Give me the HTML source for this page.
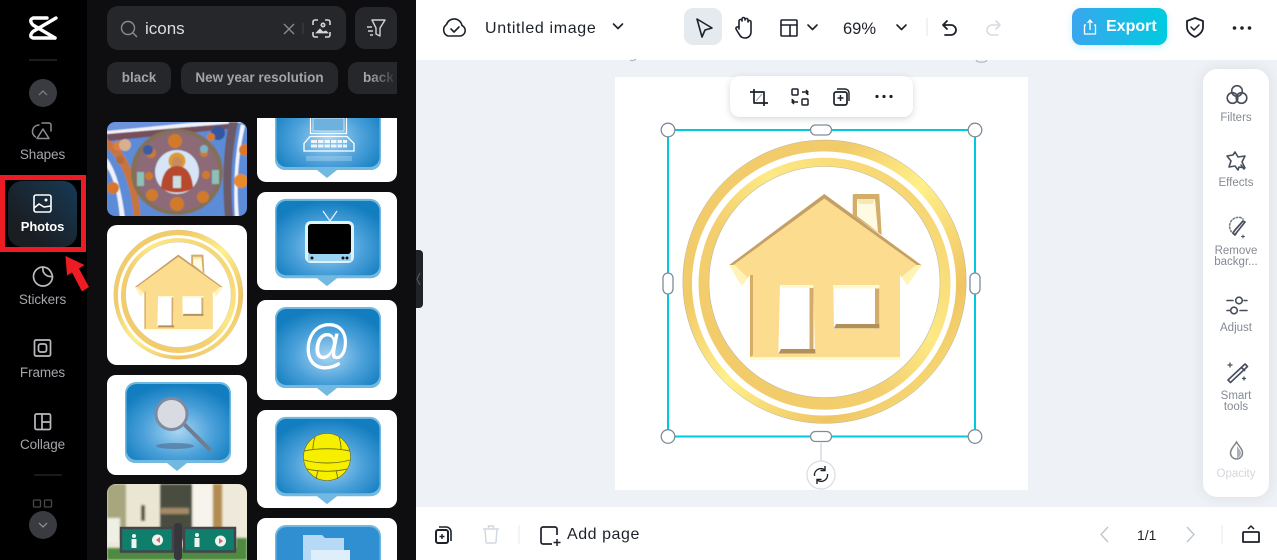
<!DOCTYPE html>
<html style="overflow:hidden;width:1277px;height:560px"><head><meta charset="utf-8"><style>
html,body{margin:0;padding:0}
body{width:1277px;height:560px;overflow:hidden;position:relative;background:#eef1f5;font-family:"Liberation Sans",sans-serif}
#w{left:0;top:0;width:1277px;height:560px;overflow:hidden}
div,span{position:absolute;white-space:nowrap}
.side{color:#a5a6ab;font-size:13.5px;width:85px;text-align:center;left:0;letter-spacing:-.1px}
.chip{background:#26272b;border-radius:10px;height:32px;top:62px;color:#a3a4a8;font-size:13.500px;line-height:31px;text-align:center;font-weight:bold}
.tool{color:#858a94;font-size:11.500px;width:66px;text-align:center;left:1203px;line-height:11px}
svg{position:absolute;left:0;top:0}
</style></head><body><div id="w">
<div style="left:0;top:0;width:87px;height:560px;background:#000"></div>
<div style="left:87px;top:0;width:329px;height:560px;background:#0e0e10"></div>
<div style="left:416px;top:0;width:861px;height:60px;background:#fff"></div>
<div style="left:416px;top:507px;width:861px;height:53px;background:#fff"></div>
<div style="left:615px;top:77px;width:413px;height:413px;background:#fff"></div>
<div style="left:1203px;top:69px;width:66px;height:428px;background:#fff;border-radius:14px;box-shadow:0 0 14px rgba(60,70,90,.1)"></div>
<div style="left:107px;top:6px;width:239px;height:44px;background:#26272b;border-radius:11px"></div>
<div style="left:355px;top:7px;width:42px;height:42px;background:#26272b;border-radius:10px"></div>
<div class="chip" style="left:107px;width:64px">black</div>
<div class="chip" style="left:181px;width:157px">New year resolution</div>
<div class="chip" style="left:348px;width:49px;border-radius:10px 0 0 10px;text-align:left;overflow:hidden"><span style="left:15px;top:0;color:#a3a4a8">back</span><span style="left:22px;top:0;width:27px;height:32px;background:linear-gradient(90deg,rgba(38,39,43,0),#26272b)"></span></div>
<div style="left:8px;top:181px;width:69px;height:66px;border-radius:14px;background:linear-gradient(45deg,#1a1d22 25%,#163a56)"></div>
<div style="left:1072px;top:8px;width:95px;height:37px;border-radius:9px;background:linear-gradient(90deg,#3aa6ee,#00cbdf);box-shadow:0 2px 8px rgba(0,190,220,.18)"></div>
<div style="left:684px;top:8px;width:38px;height:37px;background:#e5eaef;border-radius:9px"></div>
<div style="left:730px;top:76px;width:183px;height:41px;background:#fff;border-radius:10px;box-shadow:0 2px 7px rgba(50,60,80,.2)"></div>
<div style="left:107px;top:225px;width:140px;height:140px;background:#fff;border-radius:10px"></div>

<svg width="1277" height="560" viewBox="0 0 1277 560" fill="none">
<defs>
<filter id="b1" x="-5%" y="-5%" width="110%" height="110%"><feGaussianBlur stdDeviation=".6"/></filter>
<filter id="b2" x="-5%" y="-5%" width="110%" height="110%"><feGaussianBlur stdDeviation="1"/></filter>
<radialGradient id="bl" cx=".5" cy=".62" r=".62"><stop offset="0" stop-color="#a8d5f3"/><stop offset=".55" stop-color="#4aa0d9"/><stop offset="1" stop-color="#127dbf"/></radialGradient>
<linearGradient id="g1" x1="0" y1="0" x2="1" y2="1"><stop offset="0" stop-color="#f3cd6d"/><stop offset=".3" stop-color="#f2cb69"/><stop offset=".5" stop-color="#fff08a"/><stop offset=".75" stop-color="#efc563"/><stop offset="1" stop-color="#fdee88"/></linearGradient>
<linearGradient id="g2" x1="0" y1="1" x2="1" y2="0"><stop offset="0" stop-color="#f2ca67"/><stop offset=".4" stop-color="#f3cf6f"/><stop offset=".6" stop-color="#fde985"/><stop offset="1" stop-color="#f2cb69"/></linearGradient>
<symbol id="bub" viewBox="0 0 140 100" preserveAspectRatio="none">
<rect width="140" height="100" rx="9" fill="#fff"/>
<path d="M18 18a11 11 0 0 1 11-11h84a11 11 0 0 1 11 11v60a10 10 0 0 1-10 10h-34l-10 8-10-8H28a10 10 0 0 1-10-10z" fill="#71b9e0"/>
<path d="M19.500 19a10 10 0 0 1 10-10h83a10 10 0 0 1 10 10v56a10 10 0 0 1-10 10H29.500a10 10 0 0 1-10-10z" fill="url(#bl)"/>
</symbol>
<symbol id="home" viewBox="668 129 307 307">
<circle cx="824.5" cy="281.7" r="141.7" fill="url(#g1)" stroke="#b9b3a0" stroke-width=".5"/>
<circle cx="824" cy="283.5" r="132" fill="#fff"/>
<circle cx="824.5" cy="283.7" r="126" fill="url(#g2)"/>
<circle cx="824.5" cy="282" r="115.5" fill="#fff" stroke="#bdb9a8" stroke-width=".6"/>
<path d="M852.7 195l1-1h25.600l2.400 41-29-20z" fill="#d3ad6a"/><path d="M857 199h18l3 33-21-16z" fill="#fffbe3"/><path d="M857 199h18l-2 5h-14z" fill="#f6e8b0"/>
<path d="M824.3 194l97.4 71-14.4 20-7.3-10v82.3H750V275l-8.3 10.7L729.300 265z" fill="#fcdc8e"/>
<path d="M824.3 194l-95 71 2 1.500 93-68 95.400 68.500 2-1.500z" fill="#c4a066"/>
<path d="M729.300 265l12.400 20.700 6-8-13-12.700zM921.700 265l-14.400 20-6-8 15-12z" fill="#fff3b5"/>
<path d="M750 275v82.300l3-2V275z" fill="#d6ad68"/><path d="M750 357.300h150.700v2.700H750z" fill="#fffcd0"/>
<path d="M780 285h33.300l1.700 68.300h-36.700z" fill="#fff"/><path d="M809.500 287h4v66.300h-4z" fill="#d3ac6c"/><path d="M781 349h34l.5 4.500h-37z" fill="#b2905a"/>
<path d="M780 285h33.300v3H783z" fill="#fff8d0"/>
<path d="M833.300 285h46v43.300H834z" fill="#fff"/><path d="M875 288h4.300v40.300H875z" fill="#d3ac6c"/><path d="M836 324h43.300v4.300H834z" fill="#b2905a"/><path d="M833.300 285h46v3.500h-45z" fill="#fff8d0"/>
</symbol>
</defs>

<!-- left rail -->
<g stroke="#fff" stroke-width="3.400" stroke-linejoin="round" stroke-linecap="round">
<path d="M56 18L33 31.500Q28.500 36.500 33 38H55"/>
<path d="M55 38L33 25Q28.500 20 33 18H47"/>
</g>
<path d="M29 60h28" stroke="#3a3a3d" stroke-width="1"/>
<circle cx="43" cy="93" r="14" fill="#3a3b40"/>
<path d="M39 95l4-4 4 4" stroke="#7c7d82" stroke-width="1.300"/>
<g stroke="#8b8c90" stroke-width="1.500" stroke-linejoin="round" stroke-linecap="round"><path d="M39 125a6.500 6.500 0 0 0-3.500 12"/><path d="M42 123h7a2 2 0 0 1 2 2v6"/><path d="M43 129l-6 9.500h12z"/></g>
<g stroke="#fff" stroke-width="1.600" stroke-linejoin="round"><rect x="34" y="195" width="17" height="17" rx="2"/><path d="M34 208l5-4 5 3 7-1"/><circle cx="46" cy="200" r="1.500" fill="#fff" stroke="none"/></g>
<g stroke="#b9bbc0" stroke-width="1.700" stroke-linejoin="round"><path d="M43 267a9.500 9.500 0 1 0 9.500 9.500c-1-5-4-9-9.500-9.500z"/><path d="M43 267c-1 6 3 10 9.500 9.500"/></g>
<g stroke="#b9bbc0" stroke-width="1.700"><rect x="34.500" y="340" width="16" height="16" rx="1.500"/><rect x="38.500" y="344" width="8" height="8" rx="2"/></g>
<g stroke="#b9bbc0" stroke-width="1.700"><rect x="35" y="414" width="15.500" height="15.500" rx="1.500"/><path d="M42 414v15.500M42 422h8.500"/></g>
<path d="M34 475h28" stroke="#333" stroke-width="1"/>
<g stroke="#49494d" stroke-width="1.300"><rect x="33.500" y="500" width="7" height="7" rx="1"/><rect x="44.500" y="500" width="7" height="7" rx="1"/></g>
<circle cx="43" cy="525" r="14" fill="#3a3b40"/>
<path d="M39 523l4 4 4-4" stroke="#8b8c90" stroke-width="1.300"/>
<path d="M2.500 177.500h81v72h-81z" stroke="#ed1c24" stroke-width="5"/>
<path d="M65.500 256l19 9-5.500 3.500L89 287l-7 4.500-10-19-5 3z" fill="#ed1c24"/>

<!-- search -->
<g stroke="#8a8b90" stroke-width="1.400"><circle cx="128" cy="28" r="6.500"/><path d="M133 33l4 4"/></g>
<path d="M284 24l10 10M294 24l-10 10" stroke="#8a8b90" stroke-width="1.300"/>
<path d="M303 23v11" stroke="#3f4045"/>
<g stroke="#d6d7da" stroke-width="1.600"><path d="M313 25v-3a2 2 0 0 1 2-2h3M325 20h3a2 2 0 0 1 2 2v3M330 32v3a2 2 0 0 1-2 2h-3M318 37h-3a2 2 0 0 1-2-2v-3"/><circle cx="323" cy="25" r="1.700"/><path d="M316 33l4-4 3 3 3-1 2 2z" fill="#d6d7da" stroke-width=".8"/></g>
<g stroke="#d0d1d4" stroke-width="1.400" stroke-linejoin="round"><path d="M372 20h13l-5 8v8l-4-2v-6z"/><path d="M367 27h5M368 31h5M370 35h3"/></g>

<!-- thumbnails: fresco -->
<clipPath id="c1"><rect x="107" y="122" width="140" height="94" rx="8"/></clipPath>
<g clip-path="url(#c1)"><g filter="url(#b1)">
<rect x="105" y="120" width="144" height="98" fill="#5b8bd8"/>
<path d="M105 120h144v2l-60 3-82 7-2 0z" fill="#6c93dc"/>
<path d="M107 131l82-8 60-3v2l-60 5-82 8z" fill="#f2f3f8"/><path d="M107 134l82-7 40-3-1 5-120 12z" fill="#74505c"/>
<path d="M107 139c24 14 31 46 34 79h-7c-3-30-10-54-27-70z" fill="#c9733e"/>
<path d="M107 158c10 14 15 36 18 60h-5c-2-22-6-40-13-50z" fill="#f0f2fa"/>
<path d="M229 122c-6 30-7 62-4 96h8c-3-32-2-64 5-96z" fill="#6c5a68"/>
<path d="M241 124c-6 30-8 60-6 94h4c-3-32-1-62 6-92z" fill="#f3f4fa"/>
<circle cx="241" cy="181" r="7" fill="#e88a2a"/><circle cx="245" cy="150" r="6" fill="#d8762a"/><circle cx="113" cy="188" r="6" fill="#d8762a"/><circle cx="118" cy="146" r="5" fill="#d9803c"/><circle cx="218" cy="133" r="7" fill="#36559c"/><circle cx="211" cy="137" r="4" fill="#d47a2c"/><circle cx="125" cy="145" r="6" fill="#d8b090"/><circle cx="120" cy="160" r="4" fill="#b56a3a"/>
<ellipse cx="177" cy="172" rx="46" ry="43" fill="#847058"/>
<ellipse cx="177" cy="172" rx="41" ry="39" fill="#8d6b78"/>
<circle cx="177" cy="172" r="22" fill="#d6e6f7"/>
<circle cx="177" cy="161" r="8.500" fill="#dc9a30"/><circle cx="177" cy="162" r="5" fill="#c98a60"/>
<path d="M161 188c1-15 7-22 16-22s15 7 16 22c-9 6-23 6-32 0z" fill="#b7482e"/>
<rect x="173" y="176" width="8" height="12" fill="#c9dfe0"/>
<g fill="#d07a2a"><circle cx="175" cy="141" r="7"/><circle cx="177" cy="204" r="7"/><circle cx="151" cy="153" r="5"/><circle cx="204" cy="153" r="4"/><circle cx="152" cy="195" r="6"/><circle cx="203" cy="197" r="6"/><circle cx="206" cy="175" r="4"/><circle cx="149" cy="176" r="4"/></g>
<rect x="137" y="172" width="7" height="14" fill="#8cc0b8"/><rect x="212" y="170" width="7" height="14" fill="#8cc0b8"/><circle cx="148" cy="150" r="5" fill="#3a5ca0"/><circle cx="204" cy="149" r="4" fill="#7cb6c4"/>
</g></g>
<!-- computer -->
<clipPath id="c2"><path d="M257 118h140v55a9 9 0 0 1-9 9H266a9 9 0 0 1-9-9z"/></clipPath>
<g clip-path="url(#c2)"><use href="#bub" x="257" y="82" width="140" height="100"/>
<path d="M310.500 118v15.500h36V118" stroke="#fff" stroke-width="1.200"/>
<rect x="313" y="118" width="31" height="13" fill="#6db1dd" stroke="#e4f2fb" stroke-width=".8"/>
<path d="M310 136.500h37l7 7v7.500h-50v-7.500z" stroke="#fff" stroke-width="1.300"/>
<g fill="#fff" opacity=".85"><rect x="311" y="140" width="36" height="3"/><rect x="311" y="144.500" width="36" height="3"/></g>
<g fill="#7fbfe6"><rect x="317" y="140" width="1" height="7.500"/><rect x="323.500" y="140" width="1" height="7.500"/><rect x="330" y="140" width="1" height="7.500"/><rect x="336.500" y="140" width="1" height="7.500"/><rect x="342" y="140" width="1" height="7.500"/></g>
<rect x="306" y="156" width="46" height="5" fill="#cfe6f6" opacity=".3"/>
</g>
<!-- tv -->
<use href="#bub" x="257" y="192" width="140" height="98"/>
<path d="M323 211l7 10 7-10" stroke="#e8f4fb" stroke-width="1.200"/>
<rect x="305" y="221" width="49" height="42" rx="6" fill="#dff1fb"/>
<rect x="308" y="224" width="43" height="30" rx="3" fill="#000"/><rect x="308" y="254" width="43" height="7" fill="#9bd3f4"/>
<g fill="#111"><circle cx="312" cy="258" r="1.500"/><circle cx="343" cy="258" r="1.500"/><circle cx="347" cy="258" r="1.500"/></g>
<!-- at -->
<use href="#bub" x="257" y="300" width="140" height="100"/>
<text transform="translate(327,362) scale(.88,1)" text-anchor="middle" font-family="Liberation Sans" font-size="54" fill="#fff">@</text>
<!-- house thumb -->
<use href="#home" x="107" y="225" width="140" height="140"/>
<!-- magnifier -->
<use href="#bub" x="107" y="375" width="140" height="100"/>
<ellipse cx="175" cy="446" rx="19" ry="3" fill="#56789e" opacity=".75"/>
<path d="M184 424l25 25" stroke="#6d7d92" stroke-width="4" stroke-linecap="round"/>
<circle cx="171.500" cy="414" r="15.500" fill="#d9dbe3" stroke="#7d8aa0" stroke-width="3"/>
<!-- ball -->
<use href="#bub" x="257" y="410" width="140" height="98"/>
<circle cx="327" cy="457" r="23.500" fill="#f6f000" stroke="#6f6a10" stroke-width=".6"/>
<g stroke="#77740a" stroke-width=".9"><path d="M304 451c14-3 32-3 46 0M304 460c14 4 32 4 46 0M307 469c13 3 27 3 40 0M315 437c-1 3-2 6-2 12M339 437c1 3 2 6 2 12M318 470l-2 9M336 470l2 9"/></g>
<!-- folder -->
<path d="M257 560v-33a9 9 0 0 1 9-9h122a9 9 0 0 1 9 9v33z" fill="#fff"/>
<path d="M275 560v-24a11 11 0 0 1 11-11h84a11 11 0 0 1 11 11v24z" fill="#71b9e0"/>
<path d="M276.500 560v-23a10 10 0 0 1 10-10h83a10 10 0 0 1 10 10v23z" fill="#2f8fd0"/>
<path d="M303 560v-25h19l3 3h19v22z" fill="#b6daf5"/><path d="M311 550h39v10h-39z" fill="#deeefa"/>
<!-- sign photo -->
<clipPath id="c3"><path d="M107 560v-67a9 9 0 0 1 9-9h122a9 9 0 0 1 9 9v67z"/></clipPath>
<g clip-path="url(#c3)">
<rect x="107" y="484" width="140" height="76" fill="#eee9da"/>
<g filter="url(#b2)">
<rect x="107" y="484" width="19" height="56" fill="#a8a67f"/><rect x="127" y="484" width="32" height="56" fill="#ebe6d3"/>
<rect x="160" y="484" width="32" height="56" fill="#4a4d40"/><rect x="161" y="508" width="28" height="6" fill="#a58a68"/><rect x="141" y="505" width="4" height="16" fill="#4d4a3c"/>
<rect x="193" y="484" width="19" height="50" fill="#f6f4ec"/><rect x="213" y="484" width="9" height="50" fill="#b38c52"/>
<rect x="107" y="518" width="13" height="24" fill="#eef0e4"/>
<rect x="107" y="548" width="140" height="12" fill="#4f8a3f"/><rect x="236" y="538" width="11" height="22" fill="#4f8a3f"/>
</g>
<rect x="174" y="523" width="8" height="37" rx="3" fill="#37363c"/>
<rect x="121" y="528" width="52" height="23.500" fill="#0f7f6c" stroke="#45434b" stroke-width="2.500"/>
<rect x="184" y="528" width="51" height="23.500" fill="#0f7f6c" stroke="#45434b" stroke-width="2.500"/>
<g fill="#eef4ee"><circle cx="134" cy="536" r="2"/><rect x="131.500" y="539" width="5" height="9"/><circle cx="197" cy="535" r="2"/><rect x="194.500" y="538" width="5" height="9"/><circle cx="157.500" cy="540" r="5.500"/><circle cx="220.500" cy="541" r="5.500"/></g>
<path d="M160 537v6l-4-3z" fill="#e0607c"/><path d="M219 538v6l4-3z" fill="#e0607c"/>
</g>
<!-- handle -->
<path d="M416 250h3a4 4 0 0 1 4 4v50a4 4 0 0 1-4 4h-3z" fill="#222327"/>
<path d="M420 273l-3 6 3 6" stroke="#55565b" stroke-width="1.200"/>

<!-- topbar -->
<g stroke="#1d2129" stroke-width="1.600" stroke-linejoin="round" stroke-linecap="round">
<path d="M448 36h12a5.500 5.500 0 0 0 2-10.500 8 8 0 0 0-15.500-1A6.500 6.500 0 0 0 448 36z"/><path d="M451 29l3 3 5-5"/>
<path d="M613.500 24l4.500 4.500 4.500-4.500"/>
<path d="M697 19l15 9-7 2-3 7z"/>
<path d="M739 29v-8a1.500 1.500 0 0 1 3 0v-2a1.500 1.500 0 0 1 3 0v1a1.500 1.500 0 0 1 3 0v2a1.500 1.500 0 0 1 3 0v10c0 4-3 6-6 6s-4-1-6-4l-3-5a1.500 1.500 0 0 1 3-1z"/>
<rect x="781" y="20" width="16" height="16" rx="1"/><path d="M781 25h16M790 25v11"/>
<path d="M808 25l4.500 4.500L817 25"/>
<path d="M897 25l4.500 4.500L906 25"/>
<path d="M947 21l-4 4 4 4M943 25h8a5 5 0 0 1 0 10h-6" stroke-width="1.800"/>
<path d="M996 21l4 4-4 4M1000 25h-8a5 5 0 0 0 0 10h6" stroke="#d6dce3"/>
<path d="M1195 18l8 3v6c0 5-4 8-8 10-4-2-8-5-8-10v-6z" stroke-width="1.800"/><path d="M1191 27l3 3 5-5" stroke-width="1.500"/>
</g>
<path d="M927 18v18" stroke="#e3e6ea"/>
<g fill="#1d2129"><circle cx="1234.500" cy="28" r="1.800"/><circle cx="1242" cy="28" r="1.800"/><circle cx="1249.500" cy="28" r="1.800"/></g>
<g stroke="#fff" stroke-width="1.300" stroke-linejoin="round"><path d="M1086 25h-1.500v9h11v-9H1094M1090 30v-9M1087.500 23l2.500-3 2.500 3"/></g>

<!-- context toolbar -->
<g stroke="#1d2129" stroke-width="1.700" stroke-linejoin="round">
<path d="M754 89v14h14M750 92h14v14"/><path d="M756 101l6-7" stroke="#9aa0a8" stroke-width="1"/>
<g stroke-width="1.500"><rect x="792" y="89" width="6" height="6" rx="1"/><rect x="802" y="99" width="6" height="6" rx="1"/><path d="M802 92h5l1 3M806 90l2 2-2 2M798 102h-5l-1-3M794 104l-2-2 2-2"/></g>
<rect x="834" y="92" width="13" height="13" rx="2"/><path d="M837 89h8a4 4 0 0 1 4 4v8M840.500 95v6M837.500 98h6" stroke-width="1.400"/>
</g>
<g fill="#1d2129"><circle cx="877" cy="96.500" r="1.600"/><circle cx="884" cy="96.500" r="1.600"/><circle cx="891" cy="96.500" r="1.600"/></g>

<!-- image -->
<use href="#home" x="668" y="129" width="307" height="307"/>
<rect x="668" y="130" width="307" height="306.500" stroke="#00c8df" stroke-width="2"/>
<path d="M821 443v21" stroke="#ccd2d8" stroke-width="1.200"/>
<g fill="#fff" stroke="#7f8d99" stroke-width="1.300">
<circle cx="668" cy="130" r="6.800"/><circle cx="975" cy="130" r="6.800"/><circle cx="668" cy="436.500" r="6.800"/><circle cx="975" cy="436.500" r="6.800"/>
<rect x="810.500" y="125" width="21" height="10" rx="5"/><rect x="810.500" y="431.500" width="21" height="10" rx="5"/>
<rect x="663" y="273" width="10" height="21" rx="5"/><rect x="970" y="273" width="10" height="21" rx="5"/>
</g>
<circle cx="821" cy="475" r="14" fill="#fff" stroke="#d8dde2" stroke-width="1.200"/>
<g stroke="#1d2129" stroke-width="1.400"><path d="M814.500 476a6.500 6.500 0 0 1 10.500-6M827.500 474a6.500 6.500 0 0 1-10.500 6"/><path d="M825 466v4.500h-4.500M817 484v-4.500h4.500"/></g>

<!-- right tools -->
<g stroke="#474e5c" stroke-width="1.600" stroke-linejoin="round" stroke-linecap="round">
<circle cx="1237" cy="91" r="5.300"/><circle cx="1232.500" cy="98" r="5.300"/><circle cx="1241.500" cy="98" r="5.300"/>
<path d="M1235 152l3 5 7-1-3 6 3 6-6-1-1 3-3-4-6 1 2-6-4-5 6-1z"/><path d="M1241 165l3 4"/>
<g stroke-dasharray="1.500 2" stroke="#777d8a"><path d="M1234 234a9 9 0 0 1 1-16c3-1 6-1 8 1"/></g>
<path d="M1245 222l-8 10-2 3-2-2 2-3 8-9z" stroke-width="1.700"/><path d="M1243 235v3M1241.500 236.500h3" stroke-width="1"/>
<path d="M1227 300.500h6M1244 300.500h3M1227 310.500h3M1240 310.500h7"/><circle cx="1239" cy="300.500" r="3.300"/><circle cx="1234" cy="310.500" r="3.300"/>
<path d="M1245 364l-17 16 2.500 2.500 17-16z" stroke-width="1.600"/><path d="M1242 368l2.500 2.500"/><path d="M1230 363v4M1228 365h4M1244 377v3M1242.500 378.500h3" stroke-width="1.300"/>
</g>
<path d="M1236.500 442c-3 5-6 7-6 11a6 6 0 0 0 12 0c0-4-3-6-6-11z" stroke="#80868f" stroke-width="1.500"/><path d="M1237 446c2 3 4 5 4 7a5 5 0 0 1-4 5z" fill="#aeb2b8"/>

<!-- bottom bar -->
<g stroke="#1d2129" stroke-width="1.700" stroke-linejoin="round">
<rect x="436" y="530" width="12" height="13" rx="2" stroke-width="2"/><path d="M442 534v5M439.500 536.500h5" stroke-width="1.400"/><path d="M439 527h7a5 5 0 0 1 5 5v9" stroke-width="1.600"/>
<path d="M557 535v-6a2 2 0 0 0-2-2h-12a2 2 0 0 0-2 2v13a2 2 0 0 0 2 2h9"/><path d="M557 539v7M553.500 542.500h7" stroke-width="1.500"/>
<path d="M1244 532h14a1 1 0 0 1 1 1v9h-16v-9a1 1 0 0 1 1-1z" stroke-width="1.800"/><path d="M1248 529l3-3 3 3" stroke-width="1.500"/>
</g>
<g stroke="#d3d9e0" stroke-width="1.500"><path d="M485 529h12l-1 13a1 1 0 0 1-1 1h-8a1 1 0 0 1-1-1zM483 529h16M488.500 529v-3h5v3"/></g>
<path d="M519 525v19M1222 525v19" stroke="#e6e9ed"/>
<path d="M1108 527l-7 7.500 7 7.500M1187 527l7 7.500-7 7.500" stroke="#bcc4cd" stroke-width="1.300"/>
<path d="M630 60c2 1 4 1 6-1M976 60c1 3 10 3 11 0" stroke="#a9aeb9" stroke-width="1"/>
</svg>

<div style="left:145px;top:18px;font-size:17px;line-height:21px;color:#dcdde0">icons</div>
<div class="side" style="top:147px">Shapes</div>
<div class="side" style="top:219px;color:#fff;font-weight:bold;font-size:13px">Photos</div>
<div class="side" style="top:292px">Stickers</div>
<div class="side" style="top:365px">Frames</div>
<div class="side" style="top:437px">Collage</div>
<div style="left:485px;top:19px;font-size:16px;line-height:20px;color:#1d2129;letter-spacing:.65px">Untitled image</div>
<div style="left:843px;top:19px;font-size:16.500px;line-height:20px;color:#1d2129">69%</div>
<div style="left:1106px;top:17px;font-size:16px;line-height:20px;color:#fff;font-weight:bold">Export</div>
<div class="tool" style="top:113px">Filters</div>
<div class="tool" style="top:178px">Effects</div>
<div class="tool" style="top:246px">Remove<br>backgr...</div>
<div class="tool" style="top:323px">Adjust</div>
<div class="tool" style="top:391px">Smart<br>tools</div>
<div class="tool" style="top:469px;color:#d3d6db">Opacity</div>
<div style="left:567px;top:525px;font-size:16px;line-height:19px;color:#1d2129;letter-spacing:.55px">Add page</div>
<div style="left:1137px;top:526px;font-size:14px;line-height:18px;color:#1d2129">1/1</div>
</div></body></html>
